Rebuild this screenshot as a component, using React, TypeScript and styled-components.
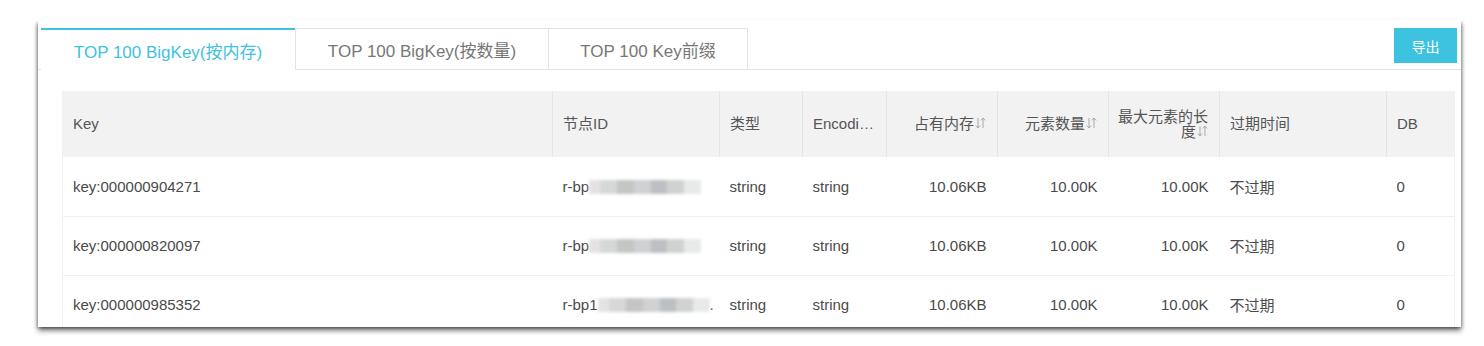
import React from "react";
import styled, { createGlobalStyle } from "styled-components";

const GlobalStyle = createGlobalStyle`
  html, body {
    margin: 0;
    padding: 0;
    background: #fff;
    font-family: "Liberation Sans", Arial, "Noto Sans CJK SC", sans-serif;
  }
  #root {
    padding: 20px 0 19px;
  }
`;

const tabs = ["TOP 100 BigKey(按内存)", "TOP 100 BigKey(按数量)", "TOP 100 Key前缀"];
const tabWidths = [255, 254, 200];

const rows = [
  { key: "key:000000904271", node: "r-bp", tail: "" },
  { key: "key:000000820097", node: "r-bp", tail: "" },
  { key: "key:000000985352", node: "r-bp1", tail: "." },
];

const SortIcon = () => (
  <svg width="11" height="14" viewBox="0 0 11 14" fill="none" stroke="#a8a8a8" strokeWidth="1">
    {/* down arrow */}
    <path d="M3 2v10M0.8 9.6L3 12l2.2-2.4" />
    {/* up arrow */}
    <path d="M8 12V2M5.8 4.4L8 2l2.2 2.4" />
  </svg>
);

const App: React.FC = () => {
  return (
    <>
      <GlobalStyle />
      <Card>
        <TabBar>
          <Tabs>
            {tabs.map((t, i) => (
              <Tab key={t} $active={i === 0} $width={tabWidths[i]}>
                {t}
              </Tab>
            ))}
          </Tabs>
          <ExportBtn>导出</ExportBtn>
        </TabBar>
        <TableWrap>
          <Table>
            <colgroup>
              <col style={{ width: 490 }} />
              <col style={{ width: 167 }} />
              <col style={{ width: 83 }} />
              <col style={{ width: 84 }} />
              <col style={{ width: 111 }} />
              <col style={{ width: 111 }} />
              <col style={{ width: 111 }} />
              <col style={{ width: 167 }} />
              <col style={{ width: 68 }} />
            </colgroup>
            <thead>
              <tr>
                <Th>Key</Th>
                <Th>节点ID</Th>
                <Th>类型</Th>
                <Th>Encoding</Th>
                <Th $right>
                  占有内存<SortIcon />
                </Th>
                <Th $right>
                  元素数量<SortIcon />
                </Th>
                <Th $right $tight>
                  最大元素的长
                  <br />度<SortIcon />
                </Th>
                <Th>过期时间</Th>
                <Th $last>DB</Th>
              </tr>
            </thead>
            <tbody>
              {rows.map((r) => (
                <tr key={r.key}>
                  <Td>{r.key}</Td>
                  <Td>
                    {r.node}
                    <Masked />
                    {r.tail}
                  </Td>
                  <Td>string</Td>
                  <Td>string</Td>
                  <Td $right>10.06KB</Td>
                  <Td $right>10.00K</Td>
                  <Td $right>10.00K</Td>
                  <Td>不过期</Td>
                  <Td>0</Td>
                </tr>
              ))}
            </tbody>
          </Table>
        </TableWrap>
      </Card>
    </>
  );
};

export default App;

const Card = styled.div`
  margin-left: 38px;
  width: 1423px;
  height: 307px;
  background: #fff;
  overflow: hidden;
  box-shadow: -2px 2px 3px -1px rgba(0, 0, 0, 0.3), 2px 2px 3px -1px rgba(0, 0, 0, 0.3),
    0 4px 5px 0 rgba(0, 0, 0, 0.45);
  box-sizing: border-box;
`;

const TabBar = styled.div`
  display: flex;
  justify-content: space-between;
  align-items: flex-start;
  margin-top: 8px;
  padding: 0 4px 0 3px;
  border-bottom: 1px solid #e3e3e3;
  height: 41px;
`;

const Tabs = styled.div`
  display: flex;
  height: 42px;
`;

const Tab = styled.div<{ $active?: boolean; $width: number }>`
  width: ${(p) => p.$width}px;
  height: 42px;
  box-sizing: border-box;
  display: flex;
  align-items: center;
  justify-content: center;
  font-size: 17px;
  background: #fff;
  color: ${(p) => (p.$active ? "#3fc2de" : "#777")};
  border: 1px solid #e3e3e3;
  border-left: ${(p) => (p.$active ? "none" : "1px solid #e3e3e3")};
  border-top: ${(p) => (p.$active ? "2px solid #3fc2de" : "1px solid #e3e3e3")};
  border-bottom: ${(p) => (p.$active ? "1px solid #fff" : "1px solid #e3e3e3")};
  margin-left: ${(p) => (p.$active ? "0" : "-1px")};
  padding-top: 1px;
`;

const ExportBtn = styled.button`
  width: 63px;
  height: 35px;
  border: none;
  background: #3dc3df;
  color: #fff;
  font-family: "Noto Sans CJK SC", sans-serif;
  font-size: 14px;
  cursor: pointer;
`;

const TableWrap = styled.div`
  padding: 21px 7px 0 24px;
`;

const Table = styled.table`
  width: 1392px;
  table-layout: fixed;
  border-collapse: collapse;
  font-size: 15px;
  color: #4a4a4a;
  border-left: 1px solid #f0f0f0;
  border-right: 1px solid #f0f0f0;
`;

const Th = styled.th<{ $right?: boolean; $tight?: boolean; $last?: boolean }>`
  height: 66px;
  box-sizing: border-box;
  padding: ${(p) => (p.$tight ? "0 11px 0 4px" : "0 11px 0 10px")};
  background: #f2f2f2;
  border-right: ${(p) => (p.$last ? "none" : "1px solid #e3e3e3")};
  font-weight: normal;
  color: #555;
  text-align: ${(p) => (p.$right ? "right" : "left")};
  line-height: ${(p) => (p.$tight ? "15px" : "20px")};
  white-space: nowrap;
  overflow: hidden;
  text-overflow: ${(p) => (p.$tight ? "clip" : "ellipsis")};
  vertical-align: middle;

  svg {
    vertical-align: -1px;
    margin-left: 1px;
  }
`;

const Td = styled.td<{ $right?: boolean }>`
  height: 59px;
  box-sizing: border-box;
  padding: 0 11px 0 10px;
  border-bottom: 1px solid #f0f0f0;
  text-align: ${(p) => (p.$right ? "right" : "left")};
  white-space: nowrap;
  overflow: hidden;
`;

const Masked = styled.span`
  display: inline-block;
  width: 112px;
  height: 14px;
  vertical-align: -2px;
  filter: blur(1.5px);
  background: linear-gradient(
    90deg,
    #e4e2e4 0 10%,
    #d6d8d8 10% 25%,
    #c4c6c4 25% 40%,
    #cfd1d3 40% 55%,
    #bcc0c4 55% 70%,
    #d0d2d2 70% 85%,
    #e8eaea 85% 100%
  );
`;
